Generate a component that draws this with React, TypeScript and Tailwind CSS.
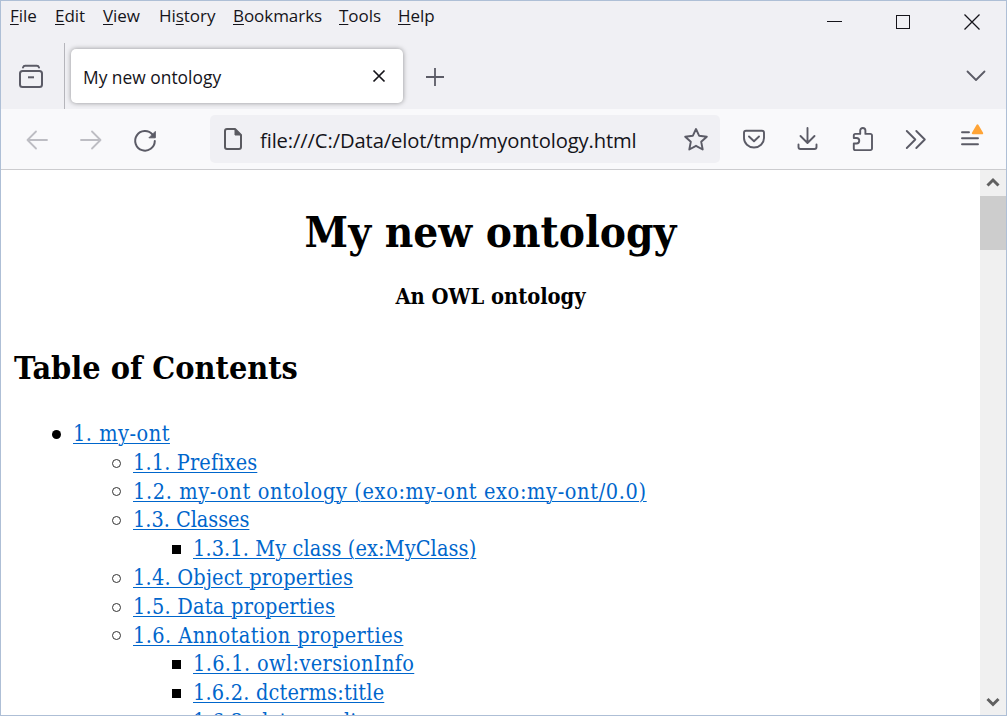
import React from "react";

const menus = [
  { text: "File", at: 0, box: "w-[45px]" },
  { text: "Edit", at: 0, box: "w-[48px]" },
  { text: "View", at: 0, box: "w-[56px]" },
  { text: "History", at: 2, box: "w-[74px]" },
  { text: "Bookmarks", at: 0, box: "w-[106px]" },
  { text: "Tools", at: 0, box: "w-[59px]" },
  { text: "Help", at: 0, box: "w-[50px]" },
];

function MenuBar() {
  return (
    <nav className="flex pl-[9px] pt-[3px] text-[17px] leading-6 tracking-[-0.05px] text-[#15141a]">
      {menus.map((m) => (
        <span key={m.text} className={`${m.box} whitespace-nowrap`}>
          {m.text.slice(0, m.at)}
          <span className="underline decoration-1 underline-offset-[2px]">{m.text[m.at]}</span>
          {m.text.slice(m.at + 1)}
        </span>
      ))}
    </nav>
  );
}

function WindowButtons() {
  return (
    <svg width="180" height="42" viewBox="826 1 180 42" fill="none" stroke="#15141a" strokeWidth="1">
      <path d="M827 21.5h15" />
      <rect x="896.5" y="15.5" width="13" height="13" />
      <path d="M964.5 14.5l15 15M979.5 14.5l-15 15" strokeWidth="1.3" />
    </svg>
  );
}

function TabStrip() {
  return (
    <div className="flex h-[66px] items-start">
      <div className="flex h-full w-16 shrink-0 border-r border-[#b5b5bb]">
        <svg className="ml-[17px] mt-[21px]" width="26" height="26" viewBox="18 64 26 26" fill="none" stroke="#5b5b66" strokeWidth="2">
          <rect x="20" y="71" width="22" height="16" rx="2.5" />
          <path d="M23 67.500c.4-1.200 1.200-1.700 2.200-1.700h11.600c1 0 1.800.5 2.200 1.700" strokeLinecap="round" />
          <path d="M28 77.300h6" />
        </svg>
      </div>
      <div className="ml-[6px] mt-[6px] flex h-[54px] w-[332px] items-center rounded-[5px] bg-white pl-[12px] text-[17.400px] text-[#15141a] shadow-[0_0_5px_rgba(0,0,0,0.4)]">
        <span className="flex-1 pt-[2px]">My new ontology</span>
        <svg className="mr-[16px]" width="16" height="16" viewBox="0 0 16 16" fill="none" stroke="#15141a" strokeWidth="1.700">
          <path d="M2.500 2.500l11 11M13.500 2.500l-11 11" />
        </svg>
      </div>
      <svg className="ml-[22px] mt-[24px]" width="20" height="20" viewBox="0 0 20 20" fill="none" stroke="#5b5b66" strokeWidth="1.800">
        <path d="M1 10h18M10 1v18" />
      </svg>
      <svg className="ml-auto mr-[20px] mt-[26px]" width="20" height="14" viewBox="0 0 20 14" fill="none" stroke="#5b5b66" strokeWidth="1.800" strokeLinecap="round" strokeLinejoin="round">
        <path d="M1.500 2.500L10 11l8.500-8.500" />
      </svg>
    </div>
  );
}

function Toolbar() {
  return (
    <div className="flex h-[61px] items-center border-b border-[#cccccf] bg-[#f9f9fb]">
      <svg width="209" height="60" viewBox="1 109 209 60" fill="none" stroke="#5b5b66" strokeWidth="2" strokeLinecap="round" strokeLinejoin="round">
        <g stroke="#bdbdc3" strokeWidth="1.800">
          <path d="M47 140H27.500M36 131.500l-8.500 8.500 8.500 8.500" />
          <path d="M81 140h19.500M92 131.500l8.500 8.500-8.500 8.500" />
        </g>
        <path d="M152.500 134.500a9.800 9.800 0 1 0 2.300 6.500" />
        <path d="M155.300 131.800v6h-6z" fill="#5b5b66" strokeWidth="1" />
      </svg>
      <div className="flex h-12 w-[510px] items-center rounded-[5px] bg-[#f0f0f4]">
        <svg className="ml-[12px] shrink-0" width="22" height="24" viewBox="222 127 22 24" fill="none" stroke="#5a5a60" strokeWidth="2" strokeLinejoin="round">
          <path d="M227 129h8l6 6v12a2 2 0 0 1-2 2h-12a2 2 0 0 1-2-2v-16a2 2 0 0 1 2-2z" />
          <path d="M235 129v6h6z" fill="#5a5a60" strokeWidth="1" />
        </svg>
        <span className="ml-[16px] flex-1 whitespace-nowrap pt-[3px] text-[20.200px] tracking-[-0.12px] text-[#15141a]">file:///C:/Data/elot/tmp/myontology.html</span>
        <svg className="mr-[11px] shrink-0" width="26" height="26" viewBox="683 126 26 26" fill="none" stroke="#5b5b66" strokeWidth="1.900" strokeLinejoin="round">
          <path d="M696 129l3.200 6.800 7.600.9-5.600 5.100 1.500 7.700-6.700-3.700-6.700 3.700 1.500-7.700-5.600-5.100 7.600-.9z" />
        </svg>
      </div>
      <svg width="286" height="60" viewBox="720 109 286 60" fill="none" stroke="#5b5b66" strokeWidth="1.900" strokeLinecap="round" strokeLinejoin="round">
        <path d="M746 130.800h16a2 2 0 0 1 2 2v5.200a10 9.500 0 0 1-20 0v-5.200a2 2 0 0 1 2-2z" />
        <path d="M749 136.500l5 4.700 5-4.700" />
        <path d="M807.500 128v14.500M800.500 136l7 7 7-7M798.500 144.500v2.500a2 2 0 0 0 2 2h14a2 2 0 0 0 2-2v-2.500" />
        <path d="M853.800 138h2.700a2.700 2.700 0 0 1 0 5.500h-2.700v5a1.600 1.600 0 0 0 1.600 1.600h15a1.600 1.600 0 0 0 1.600-1.600v-13a1.600 1.600 0 0 0-1.600-1.600h-5v-3.300a2.600 2.600 0 0 0-5.200 0v3.300h-4.800a1.600 1.600 0 0 0-1.600 1.600z" />
        <path d="M906.800 131l8.500 8.500-8.500 8.500M916.300 131l8.500 8.500-8.500 8.500" />
        <path d="M962 132.300h7M962 138.300h16M962 144.300h16" />
        <path d="M977.500 125.300l4.700 8h-9.400z" fill="#ffa436" stroke="#ffa436" strokeWidth="2" />
      </svg>
    </div>
  );
}

const entries = [
  { level: 0, text: "1. my-ont", track: "tracking-[0.52px]" },
  { level: 1, text: "1.1. Prefixes", track: "tracking-[0.15px]" },
  { level: 1, text: "1.2. my-ont ontology (exo:my-ont exo:my-ont/0.0)", track: "tracking-[0.65px]" },
  { level: 1, text: "1.3. Classes", track: "tracking-[-0.03px]" },
  { level: 2, text: "1.3.1. My class (ex:MyClass)", track: "tracking-[0.12px]" },
  { level: 1, text: "1.4. Object properties", track: "tracking-[0.23px]" },
  { level: 1, text: "1.5. Data properties", track: "tracking-[0.25px]" },
  { level: 1, text: "1.6. Annotation properties", track: "tracking-[0.45px]" },
  { level: 2, text: "1.6.1. owl:versionInfo", track: "tracking-[0.37px]" },
  { level: 2, text: "1.6.2. dcterms:title", track: "tracking-[0.2px]" },
  { level: 2, text: "1.6.3. dcterms:license", track: "tracking-[0.2px]" },
];

const indents = ["pl-[51px]", "pl-[111px]", "pl-[171px]"];
const bullets = [
  "size-[9px] rounded-full bg-black",
  "size-[9px] rounded-full border border-[#333]",
  "size-[9px] bg-black",
];

function Page() {
  return (
    <main className="h-full min-w-0 flex-1 overflow-hidden bg-white text-black font-['DejaVu_Serif_Condensed','DejaVu_Serif',serif] [font-stretch:condensed]">
      <h1 className="mt-[32px] text-center text-[43.700px] font-bold leading-[60px]">My new ontology</h1>
      <p className="mt-[20px] text-center text-[21.700px] font-bold leading-[30px]">An OWL ontology</p>
      <h2 className="mt-[34px] pl-[13px] text-[32.100px] font-bold leading-[44px]">Table of Contents</h2>
      <ul className="mt-[30px]">
        {entries.map((e) => (
          <li key={e.text} className={`${indents[e.level]} flex h-[28.8px] items-center whitespace-nowrap text-[21.5px] leading-[28.8px]`}>
            <span className="flex w-[21px] shrink-0">
              <span className={bullets[e.level]} />
            </span>
            <a className={`${e.track} text-[#0066cc] underline decoration-1 underline-offset-[2px]`}>{e.text}</a>
          </li>
        ))}
      </ul>
    </main>
  );
}

function Scrollbar() {
  return (
    <div className="flex w-[26px] shrink-0 flex-col items-center bg-[#f0f0f0]">
      <svg width="26" height="26" viewBox="0 0 26 26" fill="none" stroke="#606060" strokeWidth="3">
        <path d="M7.500 15.500l5.500-5.500 5.500 5.500" />
      </svg>
      <div className="h-[54px] w-full bg-[#cdcdcd]" />
      <svg className="mt-auto" width="26" height="26" viewBox="0 0 26 26" fill="none" stroke="#606060" strokeWidth="3">
        <path d="M7.500 10l5.500 5.500 5.500-5.500" />
      </svg>
    </div>
  );
}

export default function App() {
  return (
    <div className="flex h-[716px] w-[1007px] flex-col overflow-hidden border border-[#aebfd6] bg-[#f0f0f4] font-['Open_Sans',sans-serif]">
      <header className="flex h-[42px] shrink-0 justify-between">
        <MenuBar />
        <WindowButtons />
      </header>
      <TabStrip />
      <Toolbar />
      <div className="flex min-h-0 flex-1">
        <Page />
        <Scrollbar />
      </div>
    </div>
  );
}
